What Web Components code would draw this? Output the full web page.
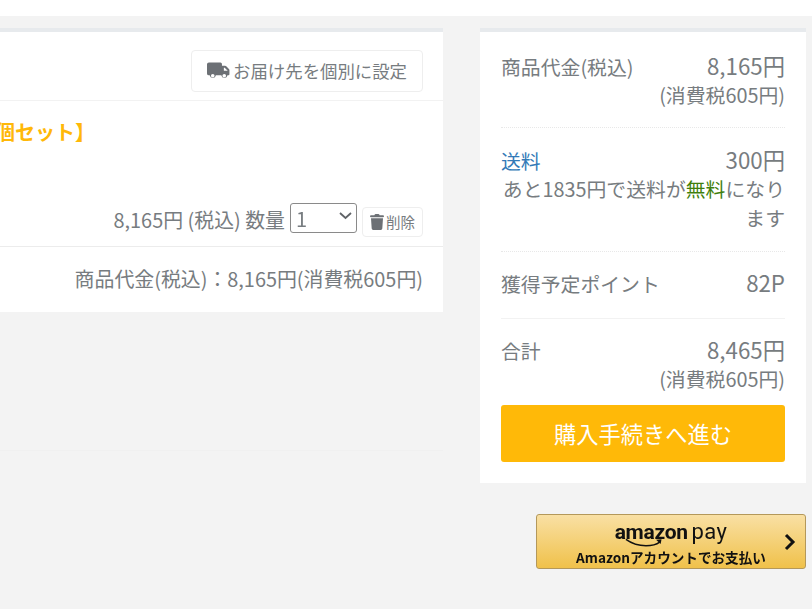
<!DOCTYPE html>
<html lang="ja">
<head>
<meta charset="utf-8">
<title>カート</title>
<style>
html,body{margin:0;padding:0;height:100%;overflow:hidden;background:#f3f3f3;}
body{font-family:"Noto Sans CJK JP","Noto Sans",sans-serif;color:#777c80;}
cart-page{filter:blur(.35px);}
</style>
</head>
<body>
<cart-page>
  <cart-item-card slot="left"></cart-item-card>
  <order-summary slot="right"></order-summary>
  <amazon-pay slot="right"></amazon-pay>
</cart-page>
<script>
class CartPage extends HTMLElement{
    constructor(){
        super();
        this.attachShadow({mode:'open'});
        this.shadowRoot.innerHTML=`
        <style>
        :host{display:block;}
        .topbar{height:16px;background:#fff;}
        .main{display:grid;grid-template-columns:443px 326px;column-gap:37px;padding-top:12px;}
        .col{display:flex;flex-direction:column;min-width:0;}
        </style>
        <div class="topbar"></div>
        <div class="main">
            <div class="col"><slot name="left"></slot></div>
            <div class="col"><slot name="right"></slot></div>
        </div>`;
    }
}

class CartItemCard extends HTMLElement{
    constructor(){
        super();
        this.attachShadow({mode:'open'});
        this.shadowRoot.innerHTML=`
        <style>
        :host{display:block;}
        .card{background:#fff;border-top:4px solid #e7eaed;overflow:hidden;}
        header{display:flex;justify-content:flex-end;padding:18px 20px 8px 0;border-bottom:1px solid #f2f2f2;}
        .btn{display:flex;align-items:center;gap:3px;height:40px;padding:0 15px;border:1px solid #eeeeee;border-radius:4px;font-size:17.4px;line-height:40px;}
        .item{height:145px;display:flex;flex-direction:column;justify-content:space-between;border-bottom:1px solid #ececec;}
        .title{margin:17px 0 0 -5px;font-size:20px;line-height:28px;font-weight:700;color:#ffb808;white-space:nowrap;}
        .line{display:flex;justify-content:flex-end;align-items:flex-start;gap:5px;padding:0 20px 9px 0;font-size:19.9px;line-height:30px;}
        .line>span{margin-top:2px;}
        .sel{position:relative;}
        select{display:block;appearance:none;-webkit-appearance:none;width:67px;height:30px;margin:0;padding:0 0 0 5px;border:1px solid #8a8a8a;border-radius:3px;background:#fff;color:#777c80;font:20px "Noto Sans CJK JP",sans-serif;}
        .chev{position:absolute;right:5px;top:9px;fill:none;stroke:#5f6367;stroke-width:1.8;}
        .del{display:flex;align-items:center;gap:2px;height:28px;padding:0 7px;border:1px solid #eeeeee;border-radius:4px;font-size:14.5px;margin-top:4px;}
        footer{padding:17px 20px 18px 0;text-align:right;font-size:19.9px;line-height:30px;}
        .ghost{height:138px;border-bottom:1px solid #f0f0f0;}
        svg.ico{display:block;fill:#6c7075;}
        </style>
        <div class="card">
            <header>
                <div class="btn">
                    <svg class="ico" width="23" height="18" viewBox="0 0 24 18"><path d="M2 0h12a1.600 1.600 0 0 1 1.600 1.600V3.500h3.200a1.800 1.800 0 0 1 1.300.5l2.800 2.900a1.800 1.800 0 0 1 .5 1.300v4.300a1 1 0 0 1-1 1h-1a3.300 3.300 0 0 1-6.500 0H9.300a3.300 3.300 0 0 1-6.500 0H2a2 2 0 0 1-2-2V2a2 2 0 0 1 2-2zm15.600 5.500v3.200h4l-3.100-3.200zM6 12a1.900 1.900 0 1 0 0 3.800A1.900 1.900 0 0 0 6 12zm12 0a1.900 1.900 0 1 0 0 3.800 1.900 1.900 0 0 0 0-3.800z"/></svg>
                    <span>お届け先を個別に設定</span>
                </div>
            </header>
            <div class="item">
                <div class="title">個セット】</div>
                <div class="line">
                    <span>8,165円 (税込) 数量</span>
                    <div class="sel">
                        <select><option>1</option></select>
                        <svg class="chev" width="13" height="8" viewBox="0 0 13 8"><path d="M1 1l5.500 5L12 1"/></svg>
                    </div>
                    <div class="del">
                        <svg class="ico" width="14" height="16" viewBox="0 0 14 16"><path d="M4.700.6A1 1 0 0 1 5.600 0h2.800a1 1 0 0 1 .9.600l.3.600h3.400a1 1 0 0 1 0 2H1a1 1 0 0 1 0-2h3.400zM1 4.300h12l-.7 10.300a1.500 1.500 0 0 1-1.500 1.400H3.200a1.500 1.500 0 0 1-1.500-1.400z"/></svg>
                        <span>削除</span>
                    </div>
                </div>
            </div>
            <footer>商品代金(税込)：8,165円(消費税605円)</footer>
        </div>
        <div class="ghost"></div>`;
    }
}

class SummaryRow extends HTMLElement{
    constructor(){
        super();
        this.attachShadow({mode:'open'});
        this.shadowRoot.innerHTML=`
        <style>
        :host{display:block;border-bottom:1px dotted #e8e8e8;font-size:19.85px;line-height:29px;}
        :host([solid]){border-bottom:1px solid #f2f2f2;}
        :host([last]){border-bottom:0;}
        .top{display:flex;justify-content:space-between;align-items:baseline;height:29px;}
        .sub{text-align:right;}
        ::slotted([slot=value]){font-size:22.3px;}
        </style>
        <div class="top"><slot name="label"></slot><slot name="value"></slot></div>
        <div class="sub"><slot></slot></div>`;
    }
}

class OrderSummary extends HTMLElement{
    constructor(){
        super();
        this.attachShadow({mode:'open'});
        this.shadowRoot.innerHTML=`
        <style>
        :host{display:block;background:#fff;border-top:4px solid #e7eaed;padding:0 21px 21px;}
        a{color:#337ab7;text-decoration:none;}
        b{font-weight:400;color:#3f7f0c;}
        button{display:block;width:100%;height:57px;padding:0;border:0;border-radius:3px;background:#ffb908;color:#fff;font:22.25px/57px "Noto Sans CJK JP",sans-serif;}
        </style>
        <summary-row style="padding:19px 0 18px">
            <span slot="label">商品代金(税込)</span><span slot="value">8,165円</span>
            (消費税605円)
        </summary-row>
        <summary-row style="padding:17px 0 19px">
            <a slot="label" href="#">送料</a><span slot="value">300円</span>
            あと1835円で送料が<b>無料</b>になります
        </summary-row>
        <summary-row solid style="padding:16px 0 21px">
            <span slot="label">獲得予定ポイント</span><span slot="value">82P</span>
        </summary-row>
        <summary-row last style="padding:16px 0 12px">
            <span slot="label">合計</span><span slot="value">8,465円</span>
            (消費税605円)
        </summary-row>
        <button>購入手続きへ進む</button>`;
    }
}

class AmazonPay extends HTMLElement{
    constructor(){
        super();
        this.attachShadow({mode:'open'});
        this.shadowRoot.innerHTML=`
        <style>
        :host{display:block;margin:31px 0 0 56px;}
        .btn{position:relative;box-sizing:border-box;height:55px;border:1px solid #b4985a;border-radius:3px;background:linear-gradient(#f9e0a4,#f0c14a);color:#111;text-align:center;}
        .logo{height:30px;font:700 21px/30px Roboto,sans-serif;letter-spacing:-.3px;color:#111;padding-top:2px;}
        .logo span{font-weight:400;font-size:22px;margin-left:-1px;letter-spacing:.4px;}
        .smile{position:absolute;left:88px;top:23px;}
        .sub{font:700 13.6px/16px "Noto Sans CJK JP",sans-serif;margin-top:2px;}
        .chev{position:absolute;right:9px;top:18px;}
        </style>
        <div class="btn">
            <div class="logo">amazon <span>pay</span></div>
            <svg class="smile" width="42" height="10" viewBox="0 0 46 10"><path d="M1 1c7 5 14 7 22 7 5 0 11-1 15-4" fill="none" stroke="#111" stroke-width="1.600"/><path d="M34 1.500l6-.5-1 5z" fill="#111"/></svg>
            <div class="sub">Amazonアカウントでお支払い</div>
            <svg class="chev" width="12" height="18" viewBox="0 0 12 18"><path d="M2 2l7 7-7 7" fill="none" stroke="#111" stroke-width="3"/></svg>
        </div>`;
    }
}

customElements.define("summary-row",SummaryRow);
customElements.define("order-summary",OrderSummary);
customElements.define("cart-item-card",CartItemCard);
customElements.define("amazon-pay",AmazonPay);
customElements.define("cart-page",CartPage);
</script>
</body>
</html>
